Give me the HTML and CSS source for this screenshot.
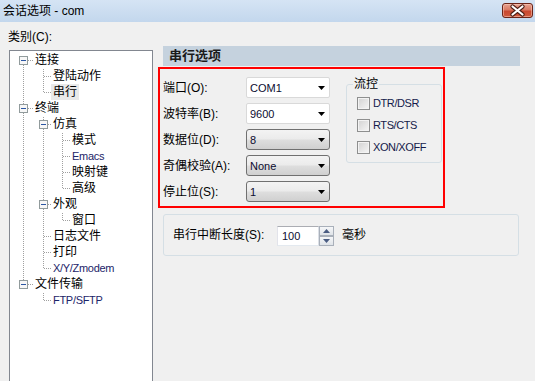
FILE: index.html
```html
<!DOCTYPE html>
<html lang="zh-CN">
<head>
<meta charset="utf-8">
<title>会话选项 - com</title>
<link rel="stylesheet" href="styles.css">
</head>
<body>
<div class="titlebar">
  <span class="title">会话选项 - com</span>
  <div class="close">
    <svg width="29" height="13" viewBox="0 0 29 13">
      <path d="M9.5 2.5 L19.5 10.5 M19.5 2.5 L9.5 10.5" stroke="#4a1c14" stroke-width="4.2" stroke-linecap="round"/>
      <path d="M9.5 2.5 L19.5 10.5 M19.5 2.5 L9.5 10.5" stroke="#ffffff" stroke-width="2.2" stroke-linecap="round"/>
    </svg>
  </div>
</div>
<div class="content">
  <div class="left">
    <div class="cat-label">类别(C):</div>
    <div class="tree">
      <svg class="tree-lines" width="142" height="260" viewBox="0 0 142 260">
        <g stroke="#a0a0a0" stroke-width="1" stroke-dasharray="1 1" fill="none">
          <path d="M13.5 14 V229"/>
          <path d="M18 9.5 H24 M18 57.5 H24 M18 233.5 H24"/>
          <path d="M33.5 18 V41.5 M34 25.5 H42 M34 41.5 H42"/>
          <path d="M33.5 66 V217.5 M38 73.5 H42 M38 153.5 H42 M34 185.5 H42 M34 201.5 H42 M34 217.5 H42"/>
          <path d="M33.5 242 V249.5 M34 249.5 H42"/>
          <path d="M52.5 82 V137.5 M53 89.5 H61 M53 105.5 H61 M53 121.5 H61 M53 137.5 H61"/>
          <path d="M52.5 162 V169.5 M53 169.5 H61"/>
        </g>
        <g class="box">
          <rect x="9.5" y="5.5" width="8" height="8"/>
          <rect x="9.5" y="53.5" width="8" height="8"/>
          <rect x="9.5" y="229.5" width="8" height="8"/>
          <rect x="29.5" y="69.5" width="8" height="8"/>
          <rect x="29.5" y="149.5" width="8" height="8"/>
        </g>
        <g stroke="#2b56a3" stroke-width="1">
          <path d="M11 9.5 H16 M11 57.5 H16 M11 233.5 H16 M31 73.5 H36 M31 153.5 H36"/>
        </g>
      </svg>
      <div class="row l0">连接</div>
      <div class="row l1">登陆动作</div>
      <div class="row sel"><span>串行</span></div>
      <div class="row l0">终端</div>
      <div class="row l1">仿真</div>
      <div class="row l2">模式</div>
      <div class="row l2 en">Emacs</div>
      <div class="row l2">映射键</div>
      <div class="row l2">高级</div>
      <div class="row l1">外观</div>
      <div class="row l2">窗口</div>
      <div class="row l1">日志文件</div>
      <div class="row l1">打印</div>
      <div class="row l1 en">X/Y/Zmodem</div>
      <div class="row l0">文件传输</div>
      <div class="row l1 en">FTP/SFTP</div>
    </div>
  </div>
  <div class="right">
    <div class="header">串行选项</div>
    <div class="redbox">
      <div class="fields">
        <div class="flabel">端口(O):</div>
        <div class="combo edit"><span>COM1</span><svg class="arrow" width="7" height="4" viewBox="0 0 7 4"><path d="M0 0 H7 L3.5 4 Z" fill="#000"/></svg></div>
        <div class="flabel">波特率(B):</div>
        <div class="combo edit"><span>9600</span><svg class="arrow" width="7" height="4" viewBox="0 0 7 4"><path d="M0 0 H7 L3.5 4 Z" fill="#000"/></svg></div>
        <div class="flabel">数据位(D):</div>
        <div class="combo list"><span>8</span><svg class="arrow" width="7" height="4" viewBox="0 0 7 4"><path d="M0 0 H7 L3.5 4 Z" fill="#000"/></svg></div>
        <div class="flabel">奇偶校验(A):</div>
        <div class="combo list"><span>None</span><svg class="arrow" width="7" height="4" viewBox="0 0 7 4"><path d="M0 0 H7 L3.5 4 Z" fill="#000"/></svg></div>
        <div class="flabel">停止位(S):</div>
        <div class="combo list"><span>1</span><svg class="arrow" width="7" height="4" viewBox="0 0 7 4"><path d="M0 0 H7 L3.5 4 Z" fill="#000"/></svg></div>
      </div>
      <fieldset class="flow">
        <legend>流控</legend>
        <div class="check-row"><span class="checkbox"></span><span class="clabel">DTR/DSR</span></div>
        <div class="check-row"><span class="checkbox"></span><span class="clabel">RTS/CTS</span></div>
        <div class="check-row"><span class="checkbox"></span><span class="clabel">XON/XOFF</span></div>
      </fieldset>
    </div>
    <div class="group-break">
      <div class="break-label">串行中断长度(S):</div>
      <div class="spin">
        <div class="spin-input">100</div>
        <div class="spin-btns">
          <div class="spin-btn"><svg width="7" height="4" viewBox="0 0 7 4"><path d="M0 4 H7 L3.5 0 Z" fill="#4a5c82"/></svg></div>
          <div class="spin-btn"><svg width="7" height="4" viewBox="0 0 7 4"><path d="M0 0 H7 L3.5 4 Z" fill="#4a5c82"/></svg></div>
        </div>
      </div>
      <div class="unit">毫秒</div>
    </div>
  </div>
</div>
</body>
</html>
```

FILE: styles.css
```css
* { box-sizing: border-box; }

body {
  margin: 0;
  width: 535px;
  height: 381px;
  overflow: hidden;
  background: #f0f0f0;
  font: 12px/16px "Liberation Sans", "Noto Sans CJK SC", sans-serif;
  color: #000;
}

.titlebar {
  height: 22px;
  display: flex;
  align-items: flex-start;
  justify-content: space-between;
  padding: 0 2px 0 3px;
  background: linear-gradient(#d5e4f4, #c3d7ed);
}

.title {
  margin-top: 3px;
  line-height: 16px;
  font-size: 12px;
}

.close {
  margin-top: 3px;
  width: 31px;
  height: 15px;
  border: 1px solid #6b2418;
  border-radius: 3px;
  background: linear-gradient(#e6a391 0%, #d97a64 45%, #c9472f 55%, #cf5a3c 100%);
  box-shadow: inset 0 0 0 1px rgba(255, 210, 195, 0.5);
  display: flex;
  align-items: center;
  justify-content: center;
}

.content {
  display: flex;
  align-items: flex-start;
}

.left {
  padding-left: 8px;
}

.cat-label {
  margin-top: 7px;
  height: 16px;
}

.tree {
  position: relative;
  margin: 5px 0 0 1px;
  width: 144px;
  height: 340px;
  border: 1px solid #828790;
  background: #fff;
  padding-top: 1px;
}

.tree-lines {
  position: absolute;
  left: 0;
  top: 0;
}

.tree-lines .box rect {
  fill: #f7f7f7;
  stroke: #919b9c;
  stroke-width: 1;
}

.row {
  position: relative;
  height: 16px;
  line-height: 16px;
  white-space: nowrap;
}

.l0 { padding-left: 25px; }
.l1 { padding-left: 43px; }
.l2 { padding-left: 62px; }

.sel { padding-left: 41px; }
.sel span {
  display: inline-block;
  height: 16px;
  padding: 0 2px;
  background: #e9e9e9;
}

.en {
  font-size: 11px;
  letter-spacing: -0.3px;
  color: #1c2468;
}

.right {
  margin-left: 5px;
}

.header {
  margin: 24px 0 1px 5px;
  width: 357px;
  height: 20px;
  background: #c5d2de;
  font-weight: bold;
  font-size: 13px;
  line-height: 20px;
  padding-left: 6px;
  color: #1b1b1b;
}

.redbox {
  width: 287px;
  height: 141px;
  border: 2px solid #ff0000;
  display: flex;
  align-items: flex-start;
}

.fields {
  display: grid;
  grid-template-columns: 83px 84px;
  grid-auto-rows: 21px;
  row-gap: 5px;
  align-items: center;
  margin: 8px 0 0 3px;
}

.flabel {
  line-height: 16px;
  white-space: nowrap;
}

.combo {
  height: 21px;
  display: flex;
  align-items: center;
  justify-content: space-between;
  padding: 0 4px 0 3px;
  font-size: 11px;
  color: #0c0c30;
}

.combo.edit {
  background: #fff;
  border: 1px solid #d9d9d9;
  border-radius: 2px;
}

.combo.list {
  border: 1px solid #707070;
  border-radius: 3px;
  background: linear-gradient(#f3f3f3 0%, #ebebeb 48%, #dedede 52%, #d0d0d0 100%);
}

.flow {
  margin: 7px 0 0 16px;
  width: 96px;
  min-width: 0;
  padding: 0 0 4px 6px;
  border: 1px solid #d5dfe5;
  border-radius: 3px;
}

.flow legend {
  padding: 0 1px;
  line-height: 16px;
}

.check-row {
  height: 22px;
  display: flex;
  align-items: center;
  gap: 3px;
  margin-left: 4px;
}

.checkbox {
  width: 13px;
  height: 13px;
  border: 1px solid #8e8f8f;
  background: linear-gradient(135deg, #d2d2d2, #f6f6f6);
  box-shadow: inset 0 0 0 1px #f3f3f3;
}

.clabel {
  font-size: 11px;
  letter-spacing: -0.4px;
  color: #141a4a;
}

.group-break {
  margin: 6px 0 0 5px;
  width: 356px;
  height: 42px;
  border: 1px solid #d5dfe5;
  border-radius: 3px;
  display: flex;
  align-items: center;
  padding-left: 9px;
}

.break-label {
  width: 104px;
  white-space: nowrap;
}

.spin {
  display: flex;
  height: 20px;
  margin-top: 2px;
}

.spin-input {
  width: 42px;
  height: 20px;
  border: 1px solid;
  border-color: #abadb3 #dbdfe6 #e3e9ef #e2e3ea;
  background: #fff;
  padding-left: 4px;
  font-size: 11px;
  line-height: 18px;
  color: #0c0c30;
}

.spin-btns {
  width: 15px;
  display: flex;
  flex-direction: column;
}

.spin-btn {
  height: 10px;
  border: 1px solid #a9b0ba;
  background: linear-gradient(#f6f7f9, #dfe3e8);
  display: flex;
  align-items: center;
  justify-content: center;
}

.unit {
  margin-left: 8px;
}
```
